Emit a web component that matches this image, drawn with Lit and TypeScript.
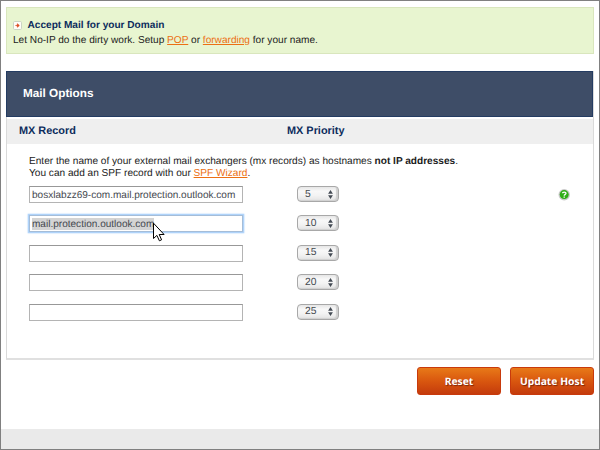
import { LitElement, html, css, svg } from "lit";
import { customElement } from "lit/decorators.js";
import { classMap } from "lit/directives/class-map.js";

interface Row { host: string; priority: number; focused?: boolean; help?: boolean }

const rows: Row[] = [
  { host: "bosxlabzz69-com.mail.protection.outlook.com", priority: 5, help: true },
  { host: "mail.protection.outlook.com", priority: 10, focused: true },
  { host: "", priority: 15 },
  { host: "", priority: 20 },
  { host: "", priority: 25 },
];

@customElement("app-root")
export class AppRoot extends LitElement {
  static styles = css`
    :host {
      display: flex;
      flex-direction: column;
      box-sizing: border-box;
      width: 600px;
      height: 450px;
      border: 1px solid #808080;
      background: #fff;
      color: #1c1c1c;
      font: 10px/12px "Liberation Sans", Arial, sans-serif;
      text-rendering: geometricPrecision;
      white-space: nowrap;
      overflow: hidden;
    }
    * { box-sizing: border-box; }
    svg { display: block; }
    .notice {
      margin: 6px 5px 0;
      height: 47px;
      border: 1px solid #d9e6bd;
      background: #e8f5d0;
      padding: 11px 6px 0;
    }
    .notice-title {
      display: flex;
      align-items: center;
      gap: 5.5px;
      height: 13px;
      color: #0c2c5c;
      font-weight: bold;
      font-size: 10.1px;
    }
    .notice-title svg { margin-bottom: 1px; }
    .notice-title span { padding-top: 1px; }
    .notice-text { margin-top: 3px; font-size: 10.1px; }
    .link {
      color: #ec7014;
      text-decoration: underline;
      text-decoration-thickness: 1px;
      text-underline-offset: 1px;
    }
    .panel {
      margin: 17px 5px 0;
      height: 289px;
      border: 1px solid #dadada;
      border-top: 0;
      border-bottom-width: 2px;
      border-bottom-color: #e0e0e0;
    }
    .panel-head {
      margin: 0 0 0 -1px;
      height: 46px;
      border: 1px solid #243c62;
      background: #3e4d67;
      color: #fff;
      font-size: 11.75px;
      font-weight: bold;
      line-height: 43px;
      padding-left: 16px;
    }
    .columns {
      display: grid;
      grid-template-columns: 268px 1fr;
      margin-top: 2px;
      height: 25px;
      background: #efefef;
      padding-left: 12px;
      color: #0c2c5c;
      font-size: 10.9px;
      font-weight: bold;
      line-height: 25px;
    }
    .body { padding: 12px 23px 0 22px; }
    .intro { height: 30px; font-size: 10.1px; }
    .row {
      display: grid;
      grid-template-columns: 268px 1fr 12px;
      align-items: start;
      height: 18px;
      margin-bottom: 11.4px;
      color: #45494f;
    }
    .field {
      width: 214px;
      height: 17px;
      border: 1px solid #b4b4b4;
      border-top-color: #989898;
      padding: 3px 2px 0;
      line-height: 12px;
      font-size: 10.05px;
    }
    .field.focused {
      border-color: #a5bdd8;
      box-shadow: 0 0 1px 1.3px #a9d0fa;
      padding-top: 2px;
    }
    .mark { background: #d4d4d4; display: inline-block; height: 12px; line-height: 13px; vertical-align: top; }
    .select {
      display: flex;
      justify-content: space-between;
      align-items: center;
      width: 42px;
      height: 16px;
      border: 1px solid #a8a8a8;
      border-radius: 4px;
      background: linear-gradient(#e6e6e6, #f8f8f8 30%, #f3f3f3 60%, #e3e3e3);
      box-shadow: inset -2px -1px 1px #d0d0d0;
      padding: 0 5px 0 7px;
    }
    .select span { padding-top: 1px; font-size: 10.3px; }
    .help { margin-top: 2px; }
    .actions {
      display: flex;
      justify-content: flex-end;
      gap: 9px;
      margin: 7px 5px 0;
    }
    .button {
      width: 84px;
      height: 28px;
      border: 1px solid #c83a0c;
      border-radius: 3px;
      background: linear-gradient(#e87918, #d9570f 50%, #c43b0c);
      color: #fff;
      font: bold 10.3px/28px "Noto Sans", sans-serif;
      text-align: center;
      text-shadow: 1px 1px 1px #7c2408;
    }
    .footer { margin-top: auto; height: 20px; background: #eaeaea; }
    .cursor { position: absolute; left: 152px; top: 222px; }
  `;

  private bullet() {
    return svg`<svg width="9" height="9" viewBox="0 0 9 9">
      <rect x=".5" y=".5" width="8" height="8" rx="1.2" fill="#fffdf8" stroke="#cbd4c4" />
      <path d="M2.4 4.5h3.4M4.3 2.8l2 1.7-2 1.7z" fill="#dc4b22" stroke="#dc4b22" stroke-width=".8" />
    </svg>`;
  }

  private help() {
    return svg`<svg class="help" width="12" height="13" viewBox="0 -1 12 13">
      <circle cx="6.2" cy="5.8" r="5.7" fill="#c8c8c8" />
      <circle cx="6.2" cy="5.6" r="4.5" fill="#2fae16" />
      <path d="M4.5 4.3C4.5 2.6 8 2.6 8 4.3C8 5.4 6.2 5.3 6.2 6.7M6.2 7.6v1.2" fill="none" stroke="#fff" stroke-width="1.3" />
    </svg>`;
  }

  private renderRow(row: Row) {
    return html`<div class="row">
      <div class=${classMap({ field: true, focused: !!row.focused })}>${row.focused
        ? html`<span class="mark">${row.host}</span>`
        : row.host}</div>
      <div class="select"><span>${row.priority}</span>
        <svg width="5" height="9" viewBox="0 0 5 9"><path d="M2.5 0L4.9 3.7H.1zM2.5 9L.1 5.3h4.8z" fill="#444b54" /></svg>
      </div>
      ${row.help ? this.help() : ""}
    </div>`;
  }

  render() {
    return html`
      <div class="notice">
        <div class="notice-title">${this.bullet()}<span>Accept Mail for your Domain</span></div>
        <div class="notice-text">Let No-IP do the dirty work. Setup <span class="link">POP</span> or <span class="link">forwarding</span> for your name.</div>
      </div>
      <div class="panel">
        <div class="panel-head">Mail Options</div>
        <div class="columns"><span>MX Record</span><span>MX Priority</span></div>
        <div class="body">
          <div class="intro">
            Enter the name of your external mail exchangers (mx records) as hostnames <b>not IP addresses</b>.<br />
            You can add an SPF record with our <span class="link">SPF Wizard</span>.
          </div>
          ${rows.map((row) => this.renderRow(row))}
        </div>
      </div>
      <div class="actions"><div class="button">Reset</div><div class="button">Update Host</div></div>
      <div class="footer"></div>
      <svg class="cursor" width="14" height="21" viewBox="0 0 14 21">
        <path d="M1.5 1.2v15.3l3.4-3.1 2.5 5.4 2.2-1-2.4-5.3h4.9z" fill="#fff" stroke="#000" />
      </svg>
    `;
  }
}
